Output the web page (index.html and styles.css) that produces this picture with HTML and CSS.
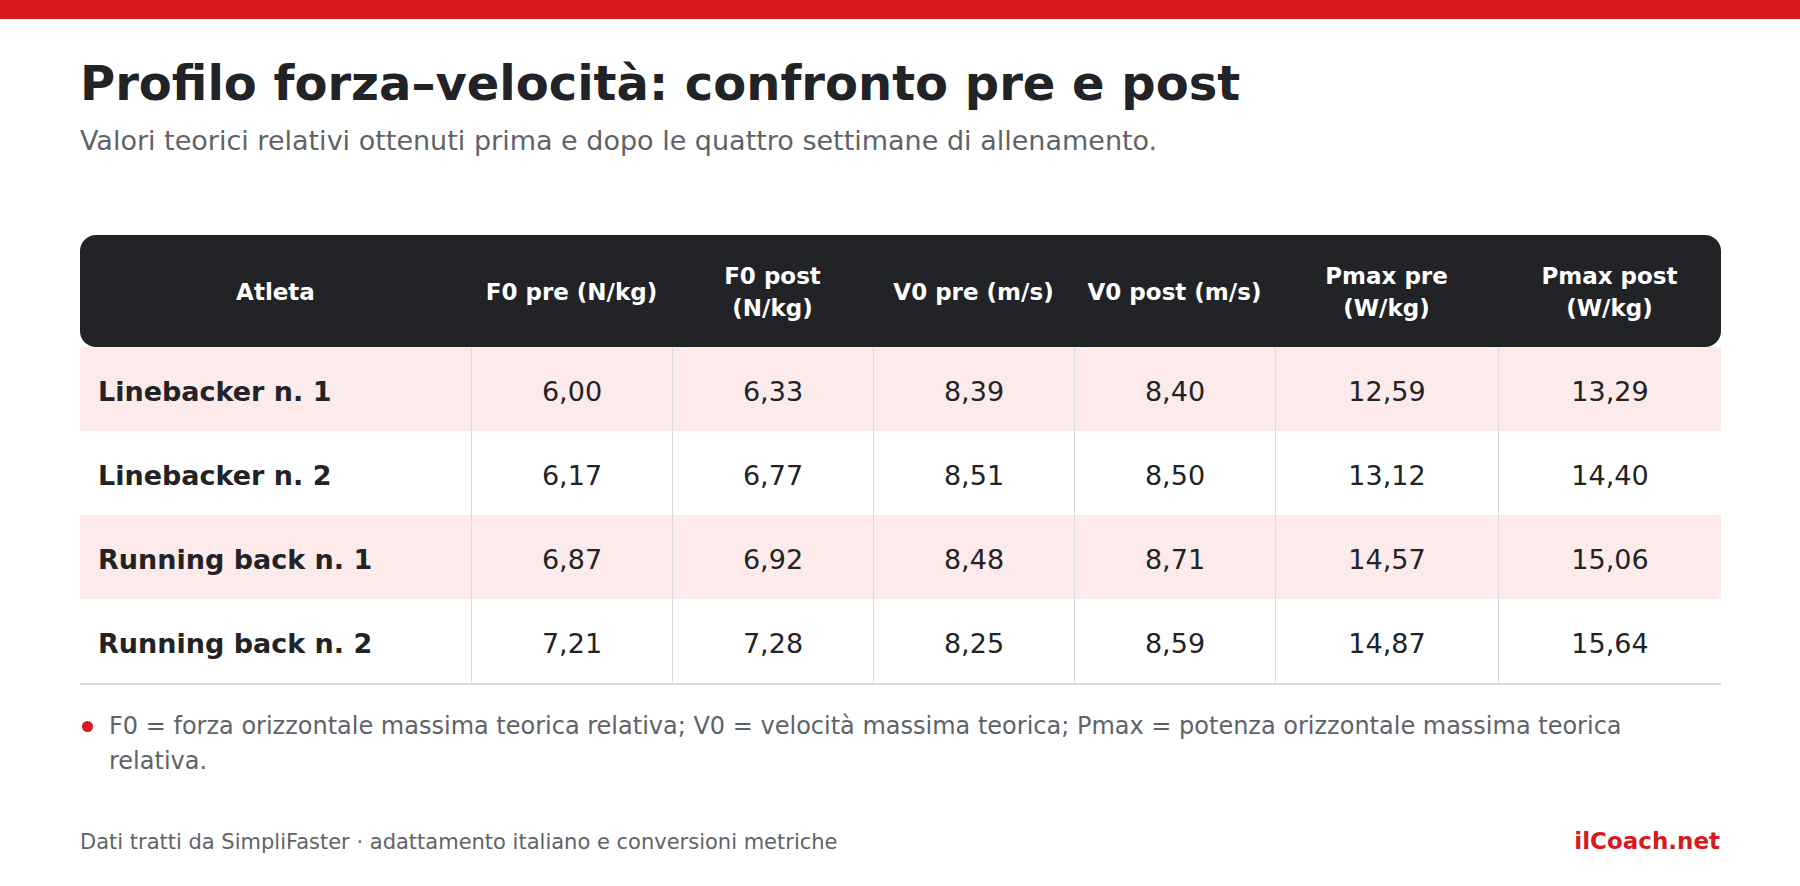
FILE: index.html
```html
<!DOCTYPE html>
<html lang="it">
<head>
<meta charset="utf-8">
<title>Profilo forza–velocità</title>
<link rel="stylesheet" href="styles.css">
</head>
<body>
<div class="topbar"></div>
<main class="page">
  <h1 class="title">Profilo forza–velocità: confronto pre e post</h1>
  <p class="subtitle">Valori teorici relativi ottenuti prima e dopo le quattro settimane di allenamento.</p>

  <table class="data">
    <colgroup>
      <col class="c-name">
      <col class="c-mid">
      <col class="c-mid">
      <col class="c-mid">
      <col class="c-mid">
      <col class="c-wide">
      <col class="c-wide">
    </colgroup>
    <thead>
      <tr>
        <th>Atleta</th>
        <th>F0 pre (N/kg)</th>
        <th>F0 post (N/kg)</th>
        <th>V0 pre (m/s)</th>
        <th>V0 post (m/s)</th>
        <th>Pmax pre (W/kg)</th>
        <th>Pmax post (W/kg)</th>
      </tr>
    </thead>
    <tbody>
      <tr class="alt">
        <td class="name">Linebacker n. 1</td>
        <td>6,00</td><td>6,33</td><td>8,39</td><td>8,40</td><td>12,59</td><td>13,29</td>
      </tr>
      <tr>
        <td class="name">Linebacker n. 2</td>
        <td>6,17</td><td>6,77</td><td>8,51</td><td>8,50</td><td>13,12</td><td>14,40</td>
      </tr>
      <tr class="alt">
        <td class="name">Running back n. 1</td>
        <td>6,87</td><td>6,92</td><td>8,48</td><td>8,71</td><td>14,57</td><td>15,06</td>
      </tr>
      <tr>
        <td class="name">Running back n. 2</td>
        <td>7,21</td><td>7,28</td><td>8,25</td><td>8,59</td><td>14,87</td><td>15,64</td>
      </tr>
    </tbody>
  </table>

  <ul class="notes">
    <li>F0 = forza orizzontale massima teorica relativa; V0 = velocità massima teorica; Pmax = potenza orizzontale massima teorica relativa.</li>
  </ul>

  <footer class="footer">
    <span class="source">Dati tratti da SimpliFaster · adattamento italiano e conversioni metriche</span>
    <span class="brand">ilCoach.net</span>
  </footer>
</main>
</body>
</html>
```

FILE: styles.css
```css
html, body {
  margin: 0;
  padding: 0;
  background: #ffffff;
}

body {
  font-family: "DejaVu Sans", "Liberation Sans", sans-serif;
  color: #222326;
}

.topbar {
  height: 19px;
  background: #d71920;
}

.page {
  padding: 0 80px;
}

.title {
  margin: 36px 0 0 0;
  font-size: 48px;
  line-height: 1.2;
  font-weight: 700;
  color: #222326;
}

.subtitle {
  margin: 9px 0 0 0;
  font-size: 27px;
  line-height: 1.4;
  color: #5f6368;
}

.data {
  margin-top: 76px;
  width: 1640px;
  table-layout: fixed;
  border-collapse: separate;
  border-spacing: 0;
}

.c-name { width: 391px; }
.c-mid { width: 201px; }
.c-wide { width: 223px; }

.data thead tr {
  height: 112px;
}

.data tbody tr {
  height: 84px;
}

.data tbody tr:last-child {
  height: 86px;
}

.data th {
  padding: 2px 12px 0;
  background: #222327;
  color: #ffffff;
  font-size: 23px;
  line-height: 1.4;
  font-weight: 700;
  text-align: center;
  vertical-align: middle;
}

.data th:first-child {
  border-radius: 16px 0 0 16px;
}

.data th:last-child {
  border-radius: 0 16px 16px 0;
}

.data td {
  padding: 5px 12px 0;
  font-size: 27px;
  text-align: center;
  vertical-align: middle;
  color: #222326;
  border-left: 1px solid #dadbdf;
}

.data td.name {
  border-left: none;
  text-align: left;
  padding-left: 18px;
  font-weight: 700;
}

.data tr.alt td {
  background: #fdeaea;
}

.data tbody tr:last-child td {
  border-bottom: 2px solid #dadbdf;
}

.notes {
  list-style: none;
  margin: 24px 0 0 0;
  padding: 0;
}

.notes li {
  position: relative;
  padding-left: 29px;
  font-size: 24px;
  line-height: 35px;
  color: #5f6368;
}

.notes li::before {
  content: "";
  position: absolute;
  left: 2px;
  top: 12px;
  width: 11px;
  height: 11px;
  border-radius: 50%;
  background: #d71920;
}

.footer {
  margin-top: 49px;
  display: flex;
  justify-content: space-between;
  align-items: baseline;
}

.source {
  font-size: 21px;
  line-height: 1.4;
  color: #5f6368;
}

.brand {
  font-size: 23px;
  font-weight: 700;
  color: #d71920;
}
```
